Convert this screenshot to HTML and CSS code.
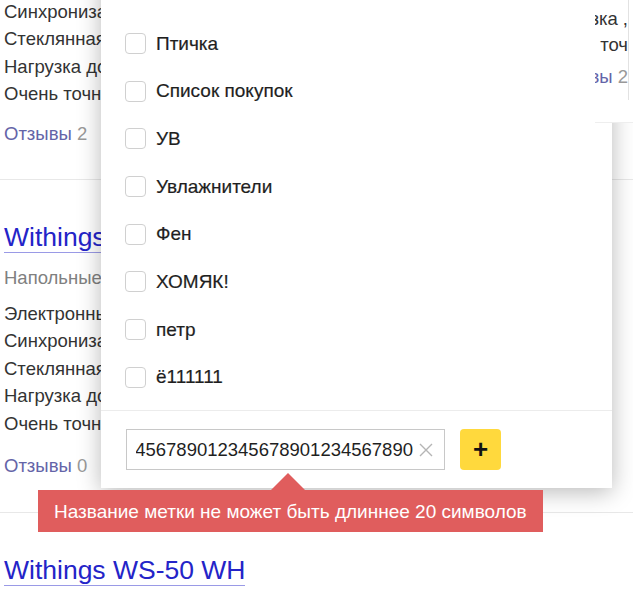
FILE: index.html
```html
<!DOCTYPE html>
<html lang="ru">
<head>
<meta charset="utf-8">
<title>Метки</title>
<link rel="stylesheet" href="styles.css">
</head>
<body>
<div class="page">
  <div class="list">
    <section class="product first">
      <a class="title" href="#">Withings WS-30</a>
      <div class="sub">Напольные весы</div>
      <ul class="features">
        <li>Электронные весы</li>
        <li>Синхронизация</li>
        <li>Стеклянная платформа</li>
        <li>Нагрузка до 180 кг</li>
        <li>Очень точные</li>
      </ul>
      <div class="reviews"><a href="#" class="rev-link">Отзывы</a> 2</div>
    </section>
    <section class="product">
      <a class="title" href="#">Withings WS-40</a>
      <div class="sub">Напольные весы</div>
      <ul class="features">
        <li>Электронные весы</li>
        <li>Синхронизация</li>
        <li>Стеклянная платформа</li>
        <li>Нагрузка до 180 кг</li>
        <li>Очень точные</li>
      </ul>
      <div class="reviews"><a href="#" class="rev-link">Отзывы</a> 0</div>
    </section>
    <section class="product">
      <a class="title" href="#">Withings WS-50 WH</a>
    </section>
  </div>

  <div class="popup">
    <ul class="tags">
      <li class="tag"><span class="box"></span><span class="label">Подарки</span></li>
      <li class="tag"><span class="box"></span><span class="label">Птичка</span></li>
      <li class="tag"><span class="box"></span><span class="label">Список покупок</span></li>
      <li class="tag"><span class="box"></span><span class="label">УВ</span></li>
      <li class="tag"><span class="box"></span><span class="label">Увлажнители</span></li>
      <li class="tag"><span class="box"></span><span class="label">Фен</span></li>
      <li class="tag"><span class="box"></span><span class="label">ХОМЯК!</span></li>
      <li class="tag"><span class="box"></span><span class="label">петр</span></li>
      <li class="tag"><span class="box"></span><span class="label">ё111111</span></li>
    </ul>
    <div class="footer">
      <div class="field">
        <div class="field-text"><span>1234567890123456789012345678901234567890</span></div>
        <svg class="clear" width="16" height="16" viewBox="0 0 16 16"><path d="M2 2 L14 14 M14 2 L2 14" stroke="#b5b5b5" stroke-width="1.4" fill="none"/></svg>
      </div>
      <button class="add" type="button">+</button>
    </div>
  </div>

  <div class="side">
    <div class="side-col">
      <div class="side-line">Нагрузка ,</div>
      <div class="side-line"><span class="dot">·</span> точ</div>
      <div class="side-line side-rev"><span class="rev-link">Отзывы</span> 2</div>
    </div>
  </div>

  <div class="tooltip">Название метки не может быть длиннее 20 символов</div>
</div>
</body>
</html>
```
FILE: styles.css
```css
html, body {
  margin: 0;
  padding: 0;
}
body {
  width: 633px;
  height: 594px;
  overflow: hidden;
  background: #fff;
  font-family: "Liberation Sans", Arial, sans-serif;
  color: #333;
}
.page {
  position: relative;
  width: 633px;
  height: 594px;
  overflow: hidden;
}
.list {
  margin-top: -151px;
}
.product {
  border-top: 1px solid #e8e8e8;
  padding: 42px 0 33px 4px;
}
.product.first {
  border-top: 0;
  padding-top: 43px;
  padding-bottom: 31px;
}
.product.first .reviews {
  margin-top: 12.5px;
}
.title {
  display: inline-block;
  font-size: 26.5px;
  line-height: 30px;
  color: #2424c8;
  text-decoration: none;
  border-bottom: 1px solid #9a9ae6;
}
.sub {
  margin-top: 11px;
  font-size: 18.5px;
  line-height: 27.5px;
  color: #808080;
  white-space: nowrap;
}
.features {
  list-style: none;
  margin: 8.5px 0 0;
  padding: 0;
  font-size: 18.5px;
  line-height: 27.5px;
  color: #333;
  white-space: nowrap;
}
.reviews {
  margin-top: 14.5px;
  font-size: 18.5px;
  line-height: 27.5px;
  color: #999;
}
.rev-link {
  color: #6464a8;
  text-decoration: none;
}

.side {
  position: absolute;
  left: 595px;
  top: 0;
  width: 38px;
  height: 122px;
  background: #fff;
  border-bottom: 1px solid #eeeeee;
  z-index: 3;
}
.side-col {
  box-sizing: border-box;
  width: 34px;
  height: 100px;
  padding-top: 6px;
  border-right: 1px solid #e2e2e2;
  overflow: hidden;
  display: flex;
  flex-direction: column;
  align-items: flex-end;
  font-size: 18.5px;
  color: #333;
}
.side-line {
  line-height: 26px;
  white-space: nowrap;
}
.side-rev {
  margin-top: 6px;
  color: #999;
}
.dot {
  color: #4a8fd8;
}

.popup {
  position: absolute;
  left: 101px;
  top: -28px;
  width: 511px;
  background: #fff;
  box-shadow: 0 4px 22px rgba(0, 0, 0, 0.28);
  z-index: 2;
}
.tags {
  list-style: none;
  margin: 0;
  padding: 0 0 9px 24px;
}
.tag {
  display: flex;
  align-items: center;
  height: 47.7px;
}
.tag:first-child {
  align-items: flex-start;
  padding-top: 1px;
  box-sizing: border-box;
}
.box {
  width: 19px;
  height: 19px;
  border: 1px solid #d0d0d0;
  border-radius: 4px;
  box-sizing: content-box;
  margin-right: 10px;
  flex: none;
}
.label {
  font-size: 19px;
  color: #1f1f1f;
  -webkit-text-stroke: 0.2px #1f1f1f;
}
.footer {
  border-top: 1px solid #ececec;
  display: flex;
  align-items: center;
  gap: 15px;
  padding: 18px 0 18px 25px;
}
.field {
  box-sizing: border-box;
  width: 319px;
  height: 41px;
  border: 1px solid #c8c8c8;
  display: flex;
  align-items: center;
  padding: 0 10px 0 9px;
}
.field-text {
  flex: 1;
  overflow: hidden;
  display: flex;
  justify-content: flex-end;
  font-size: 18.5px;
  color: #1f1f1f;
  white-space: nowrap;
}
.clear {
  flex: none;
  margin-left: 5px;
}
.add {
  width: 41px;
  height: 41px;
  border: 0;
  border-radius: 4px;
  background: #ffd93d;
  font-family: "Liberation Sans", Arial, sans-serif;
  font-size: 26px;
  font-weight: bold;
  line-height: 41px;
  color: #111;
  padding: 0;
}

.tooltip {
  position: absolute;
  left: 38px;
  top: 490px;
  width: 505px;
  height: 42px;
  box-sizing: border-box;
  padding-left: 16px;
  background: #e05d5d;
  color: #fff;
  font-size: 19px;
  line-height: 43px;
  white-space: nowrap;
  z-index: 3;
}
.tooltip::before {
  content: "";
  position: absolute;
  left: 233px;
  top: -17px;
  border-left: 17px solid transparent;
  border-right: 17px solid transparent;
  border-bottom: 17px solid #e05d5d;
}
```
